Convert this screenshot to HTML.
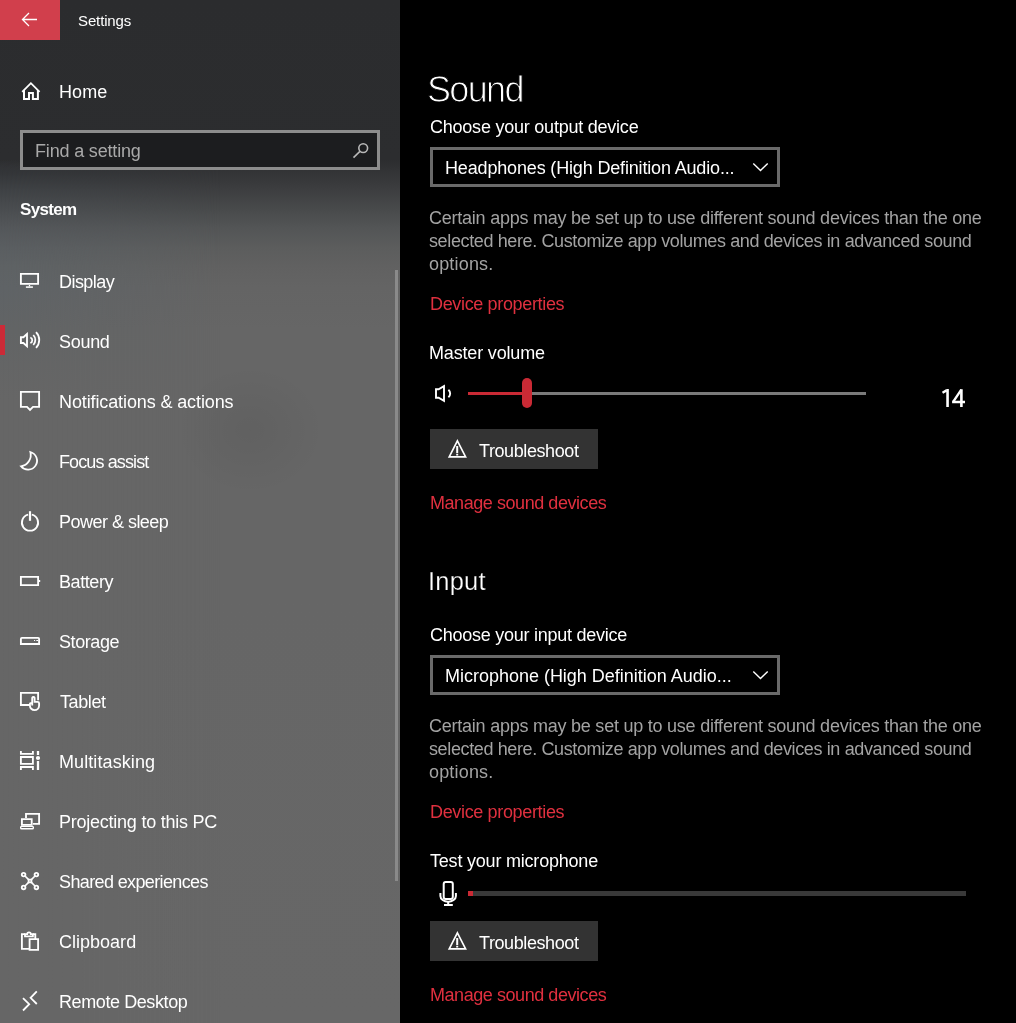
<!DOCTYPE html>
<html><head><meta charset="utf-8"><style>
html,body{margin:0;padding:0;width:1016px;height:1023px;overflow:hidden;background:#000}
body{position:relative;font-family:"Liberation Sans",sans-serif}
.t{position:absolute;white-space:nowrap;line-height:1;-webkit-font-smoothing:antialiased;will-change:transform}
#left{position:absolute;left:0;top:0;width:400px;height:1023px;
background:radial-gradient(ellipse 75px 65px at 250px 430px, rgba(0,0,0,0.055), rgba(0,0,0,0)),linear-gradient(180deg, #2b2c2e 0px, #2c2d2f 160px, #333436 172px, #3d3e40 190px, #484a4b 209px, #535556 228px, #5c5d5d 248px, #616161 267px, #646464 287px, #666 330px, #666 600px, #676767 1023px)}
#leftov{position:absolute;left:0;top:0;width:400px;height:1023px;
background:linear-gradient(180deg, rgba(43,44,46,0) 0px, rgba(43,44,46,0) 160px, #333538 172px, #3f4245 190px, #4a4d50 209px, #54575a 228px, #5a5e61 248px, #5e6264 267px, #5f6366 287px, #626465 330px, #666 400px, #666 1023px);
-webkit-mask-image:linear-gradient(90deg, #000 0px, rgba(0,0,0,0.6) 100px, rgba(0,0,0,0) 220px)}
#right{position:absolute;left:400px;top:0;width:616px;height:1023px;background:#000}
</style></head><body>
<div id="left"></div><div id="leftov"></div>
<div style="position:absolute;left:0;top:0;width:60px;height:40px;background:#d13f4c"></div>
<svg style="position:absolute;left:0px;top:0px;overflow:visible" width="60" height="40" viewBox="0 0 60 40"><path d="M37 19.5H22.5M29 13L22.5 19.5L29 26" stroke="#fff" stroke-width="1.3" fill="none"/></svg>
<svg style="position:absolute;left:20px;top:81px;overflow:visible" width="22" height="22" viewBox="0 0 22 22"><path d="M2.2 10.9L10.9 2.2L19.6 10.9" stroke="#fff" stroke-width="1.8" fill="none"/><path d="M4 9V17.9H9V12H12.9V17.9H17.9V9" stroke="#fff" stroke-width="2" fill="none"/></svg>
<div style="position:absolute;left:20px;top:130px;width:354px;height:34px;border:3px solid #8d8d8d;background:#1c1d1f"></div>
<svg style="position:absolute;left:350px;top:140px;overflow:visible" width="22" height="22" viewBox="0 0 22 22"><circle cx="13.2" cy="8.1" r="4.4" stroke="#b8b8b8" stroke-width="1.6" fill="none"/><path d="M9.9 11.4L3.5 17.6" stroke="#b8b8b8" stroke-width="1.6"/></svg>
<svg style="position:absolute;left:20px;top:271px;overflow:visible" width="22" height="22" viewBox="0 0 22 22"><path d="M0.9 2.9H18.1V12.9H0.9Z" stroke="#fff" stroke-width="1.85" fill="none"/><path d="M9.5 13.9V15.4" stroke="#fff" stroke-width="1.3"/><path d="M5.9 16.1H12.9" stroke="#fff" stroke-width="1.5"/></svg>
<svg style="position:absolute;left:20px;top:331px;overflow:visible" width="22" height="22" viewBox="0 0 22 22"><path d="M7 3L3.4 6.2H0.9V12H3.4L7 15.2Z" stroke="#fff" stroke-width="1.85" fill="none" stroke-linejoin="miter"/><path d="M10.3 6.5A2.9 2.9 0 0 1 10.3 12 M13.3 4A7.25 7.25 0 0 1 13.3 14 M16 1.2A11 11 0 0 1 16 16.8" stroke="#fff" stroke-width="1.8" fill="none"/></svg>
<svg style="position:absolute;left:20px;top:391px;overflow:visible" width="22" height="22" viewBox="0 0 22 22"><path d="M0.9 0.9H19.1V15.8H13L10 19L7 15.8H0.9Z" stroke="#fff" stroke-width="1.85" fill="none"/></svg>
<svg style="position:absolute;left:20px;top:451px;overflow:visible" width="22" height="22" viewBox="0 0 22 22"><path d="M10.4 1A9 9 0 1 1 1 15.3A11.5 11.5 0 0 0 10.4 1Z" stroke="#fff" stroke-width="1.8" fill="none"/></svg>
<svg style="position:absolute;left:20px;top:511px;overflow:visible" width="22" height="22" viewBox="0 0 22 22"><path d="M8.2 3.7A8.1 8.1 0 1 0 11.8 3.7" stroke="#fff" stroke-width="1.85" fill="none"/><path d="M10 0.2V9.8" stroke="#fff" stroke-width="2.2"/></svg>
<svg style="position:absolute;left:20px;top:571px;overflow:visible" width="22" height="22" viewBox="0 0 22 22"><path d="M0.9 5.9H18.1V14.1H0.9Z" stroke="#fff" stroke-width="1.85" fill="none"/><path d="M19 8.9H20.2V11.1H19Z" fill="#fff"/></svg>
<svg style="position:absolute;left:20px;top:631px;overflow:visible" width="22" height="22" viewBox="0 0 22 22"><path d="M0.9 13V7.9Q0.9 6.9 1.9 6.9H18.1Q19.1 6.9 19.1 7.9V13Z" stroke="#fff" stroke-width="1.85" fill="none"/><path d="M14 9H15.1V10H14Z M16.3 9H18V10H16.3Z" fill="#fff"/></svg>
<svg style="position:absolute;left:20px;top:691px;overflow:visible" width="22" height="22" viewBox="0 0 22 22"><path d="M18.1 9.3V1.9H0.9V14H9.4" stroke="#fff" stroke-width="1.85" fill="none"/><path d="M12.2 14.6V6.8A1.3 1.3 0 0 1 14.6 6.8V10.8H17.6Q19.1 10.8 19.1 12.3V14.5A4.6 4.6 0 0 1 9.9 14.5V13.4Q9.9 11.9 11.8 11.9" stroke="#fff" stroke-width="1.85" fill="none"/></svg>
<svg style="position:absolute;left:20px;top:751px;overflow:visible" width="22" height="22" viewBox="0 0 22 22"><path d="M0.9 0V2.9H12.9V0 M0.9 6H12.9V12.9H0.9Z M0.9 19.1V16H12.9V19.1" stroke="#fff" stroke-width="1.85" fill="none"/><path d="M18 0V3.9 M18 10.1V19.1" stroke="#fff" stroke-width="2.3"/><circle cx="18" cy="7" r="2.1" fill="#fff"/></svg>
<svg style="position:absolute;left:20px;top:811px;overflow:visible" width="22" height="22" viewBox="0 0 22 22"><path d="M6 7.1V2.9H19.1V12.9H13" stroke="#fff" stroke-width="1.85" fill="none"/><path d="M1.9 8.1H11.7V13.9H1.9Z" stroke="#fff" stroke-width="1.85" fill="none"/><rect x="0.7" y="15.4" width="12.6" height="2.3" rx="0.8" stroke="#fff" stroke-width="1.4" fill="none"/></svg>
<svg style="position:absolute;left:20px;top:871px;overflow:visible" width="22" height="22" viewBox="0 0 22 22"><circle cx="3.6" cy="3.6" r="1.8" stroke="#fff" stroke-width="1.85" fill="none"/><circle cx="16.4" cy="3.6" r="1.8" stroke="#fff" stroke-width="1.85" fill="none"/><circle cx="3.6" cy="16.4" r="1.8" stroke="#fff" stroke-width="1.85" fill="none"/><circle cx="16.4" cy="16.4" r="1.8" stroke="#fff" stroke-width="1.85" fill="none"/><path d="M8.6 8.6H11.4V11.4H8.6Z" stroke="#fff" stroke-width="1.85" fill="none"/><path d="M5 5L8.6 8.6 M15 5L11.4 8.6 M5 15L8.6 11.4 M15 15L11.4 11.4" stroke="#fff" stroke-width="1.6"/></svg>
<svg style="position:absolute;left:20px;top:931px;overflow:visible" width="22" height="22" viewBox="0 0 22 22"><path d="M9.6 17.9H1.9V3.1H5 M12.9 3.1H15.3V8.1" stroke="#fff" stroke-width="1.85" fill="none"/><path d="M5 5.4V3.1H7.2A1.8 1.8 0 0 1 10.8 3.1H12.9V5.4Z" stroke="#fff" stroke-width="1.8" fill="none"/><path d="M9.6 8.1H18.1V18.9H9.6Z" stroke="#fff" stroke-width="1.85" fill="none"/></svg>
<svg style="position:absolute;left:20px;top:991px;overflow:visible" width="22" height="22" viewBox="0 0 22 22"><path d="M3 7.1L9.2 13.2L3 19.5 M16.8 0.3L10.6 6.8L16.8 13" stroke="#fff" stroke-width="1.8" fill="none"/></svg>
<div style="position:absolute;left:0;top:325px;width:5px;height:30px;background:#cc2a37"></div>
<div style="position:absolute;left:395px;top:270px;width:3px;height:611px;background:#8a8a8a"></div>
<div id="right"></div>
<div style="position:absolute;left:430px;top:147px;width:344px;height:34px;border:3px solid #6a6a6a"></div>
<svg style="position:absolute;left:750px;top:158px;overflow:visible" width="22" height="20" viewBox="0 0 22 20"><path d="M3.3 5.5L10.5 12.5L17.7 5.5" stroke="#fff" stroke-width="1.4" fill="none"/></svg>
<svg style="position:absolute;left:432px;top:382px;overflow:visible" width="22" height="24" viewBox="0 0 22 24"><path d="M12 4.1L6.6 7.2H4V15.7H6.6L12 18.9Z" stroke="#fff" stroke-width="1.9" fill="none"/><path d="M16.4 7.7A5 5 0 0 1 16.4 15.3" stroke="#fff" stroke-width="1.9" fill="none"/></svg>
<div style="position:absolute;left:468px;top:392px;width:398px;height:3px;background:#7a7a7a"></div>
<div style="position:absolute;left:468px;top:392px;width:58px;height:3px;background:#ca2a35"></div>
<div style="position:absolute;left:522px;top:378px;width:10px;height:30px;border-radius:5px;background:#ca2a35"></div>
<div style="position:absolute;left:430px;top:429px;width:168px;height:40px;background:#333"></div>
<svg style="position:absolute;left:446px;top:437px;overflow:visible" width="24" height="24" viewBox="0 0 24 24"><path d="M11.4 3.9L19.6 19.9H3.2Z" stroke="#fff" stroke-width="1.65" fill="none"/><path d="M11.2 8.9V16.3 M11.2 17V18.5" stroke="#fff" stroke-width="2"/></svg>
<div style="position:absolute;left:430px;top:655px;width:344px;height:34px;border:3px solid #6a6a6a"></div>
<svg style="position:absolute;left:750px;top:666px;overflow:visible" width="22" height="20" viewBox="0 0 22 20"><path d="M3.3 5.5L10.5 12.5L17.7 5.5" stroke="#fff" stroke-width="1.4" fill="none"/></svg>
<svg style="position:absolute;left:437px;top:879px;overflow:visible" width="24" height="30" viewBox="0 0 24 30"><rect x="6.7" y="3" width="9.1" height="16.9" rx="2" stroke="#fff" stroke-width="2" fill="none"/><path d="M3.4 13.9V17A7.75 5.7 0 0 0 18.9 17V13.9" stroke="#fff" stroke-width="2" fill="none"/><path d="M11.2 22.7V26 M7 26.05H15.8" stroke="#fff" stroke-width="2" fill="none"/></svg>
<div style="position:absolute;left:468px;top:891px;width:498px;height:5px;background:#393939"></div>
<div style="position:absolute;left:468px;top:891px;width:5px;height:5px;background:#ca2a35"></div>
<div style="position:absolute;left:430px;top:921px;width:168px;height:40px;background:#333"></div>
<svg style="position:absolute;left:446px;top:929px;overflow:visible" width="24" height="24" viewBox="0 0 24 24"><path d="M11.4 3.9L19.6 19.9H3.2Z" stroke="#fff" stroke-width="1.65" fill="none"/><path d="M11.2 8.9V16.3 M11.2 17V18.5" stroke="#fff" stroke-width="2"/></svg>
<svg style="position:absolute;left:936px;top:384px;overflow:visible" width="34" height="28" viewBox="0 0 34 28"><path d="M11.55 5V22.9 M25.4 5.3V22.9 M16.1 18H29" stroke="#fff" stroke-width="2.6" fill="none"/><path d="M10.6 6.4L6.5 8.8 M25.3 5.6L17.3 17.6" stroke="#fff" stroke-width="2.4" fill="none"/></svg>
<div class="t" style="left:77.5px;top:13.2px;font-size:15px;color:#ffffff;letter-spacing:-0.129px;font-weight:normal;">Settings</div>
<div class="t" style="left:59.0px;top:82.56px;font-size:18px;color:#ffffff;letter-spacing:0.1px;font-weight:normal;">Home</div>
<div class="t" style="left:35.4px;top:141.66px;font-size:18px;color:#a9a9a9;letter-spacing:-0.169px;font-weight:normal;">Find a setting</div>
<div class="t" style="left:19.7px;top:201.11px;font-size:17px;color:#ffffff;letter-spacing:-0.66px;font-weight:bold;">System</div>
<div class="t" style="left:58.5px;top:272.76px;font-size:18px;color:#ffffff;letter-spacing:-0.55px;font-weight:normal;">Display</div>
<div class="t" style="left:58.5px;top:332.76px;font-size:18px;color:#ffffff;letter-spacing:-0.3px;font-weight:normal;">Sound</div>
<div class="t" style="left:58.5px;top:392.76px;font-size:18px;color:#ffffff;letter-spacing:-0.114px;font-weight:normal;">Notifications &amp; actions</div>
<div class="t" style="left:58.5px;top:452.76px;font-size:18px;color:#ffffff;letter-spacing:-0.882px;font-weight:normal;">Focus assist</div>
<div class="t" style="left:58.5px;top:512.76px;font-size:18px;color:#ffffff;letter-spacing:-0.517px;font-weight:normal;">Power &amp; sleep</div>
<div class="t" style="left:58.5px;top:572.76px;font-size:18px;color:#ffffff;letter-spacing:-0.417px;font-weight:normal;">Battery</div>
<div class="t" style="left:58.5px;top:632.76px;font-size:18px;color:#ffffff;letter-spacing:-0.417px;font-weight:normal;">Storage</div>
<div class="t" style="left:59.5px;top:692.76px;font-size:18px;color:#ffffff;letter-spacing:-0.4px;font-weight:normal;">Tablet</div>
<div class="t" style="left:58.5px;top:752.76px;font-size:18px;color:#ffffff;letter-spacing:0.091px;font-weight:normal;">Multitasking</div>
<div class="t" style="left:58.5px;top:812.76px;font-size:18px;color:#ffffff;letter-spacing:-0.24px;font-weight:normal;">Projecting to this PC</div>
<div class="t" style="left:58.5px;top:872.76px;font-size:18px;color:#ffffff;letter-spacing:-0.624px;font-weight:normal;">Shared experiences</div>
<div class="t" style="left:58.5px;top:932.76px;font-size:18px;color:#ffffff;letter-spacing:0.012px;font-weight:normal;">Clipboard</div>
<div class="t" style="left:58.5px;top:992.76px;font-size:18px;color:#ffffff;letter-spacing:-0.408px;font-weight:normal;">Remote Desktop</div>
<div class="t" style="left:427.4px;top:72.13px;font-size:36px;color:#ffffff;letter-spacing:-1.675px;font-weight:normal;-webkit-text-stroke:1.0px #000;">Sound</div>
<div class="t" style="left:429.5px;top:117.76px;font-size:18px;color:#ffffff;letter-spacing:-0.229px;font-weight:normal;">Choose your output device</div>
<div class="t" style="left:444.9px;top:158.66px;font-size:18px;color:#ffffff;letter-spacing:-0.16px;font-weight:normal;">Headphones (High Definition Audio...</div>
<div class="t" style="left:429.3px;top:208.66px;font-size:18px;color:#a3a3a3;letter-spacing:-0.236px;font-weight:normal;">Certain apps may be set up to use different sound devices than the one</div>
<div class="t" style="left:429.3px;top:231.66px;font-size:18px;color:#a3a3a3;letter-spacing:-0.377px;font-weight:normal;">selected here. Customize app volumes and devices in advanced sound</div>
<div class="t" style="left:429.3px;top:255.26px;font-size:18px;color:#a3a3a3;letter-spacing:0.171px;font-weight:normal;">options.</div>
<div class="t" style="left:429.9px;top:294.96px;font-size:18px;color:#e0303f;letter-spacing:-0.344px;font-weight:normal;">Device properties</div>
<div class="t" style="left:429.3px;top:343.76px;font-size:18px;color:#ffffff;letter-spacing:-0.167px;font-weight:normal;">Master volume</div>
<div class="t" style="left:478.5px;top:441.76px;font-size:18px;color:#ffffff;letter-spacing:-0.409px;font-weight:normal;">Troubleshoot</div>
<div class="t" style="left:430.0px;top:493.76px;font-size:18px;color:#e0303f;letter-spacing:-0.442px;font-weight:normal;">Manage sound devices</div>
<div class="t" style="left:427.7px;top:568.71px;font-size:25.5px;color:#ffffff;letter-spacing:0.225px;font-weight:normal;-webkit-text-stroke:0.25px #000;">Input</div>
<div class="t" style="left:429.5px;top:625.76px;font-size:18px;color:#ffffff;letter-spacing:-0.252px;font-weight:normal;">Choose your input device</div>
<div class="t" style="left:444.9px;top:666.66px;font-size:18px;color:#ffffff;letter-spacing:-0.014px;font-weight:normal;">Microphone (High Definition Audio...</div>
<div class="t" style="left:429.3px;top:716.66px;font-size:18px;color:#a3a3a3;letter-spacing:-0.236px;font-weight:normal;">Certain apps may be set up to use different sound devices than the one</div>
<div class="t" style="left:429.3px;top:739.66px;font-size:18px;color:#a3a3a3;letter-spacing:-0.377px;font-weight:normal;">selected here. Customize app volumes and devices in advanced sound</div>
<div class="t" style="left:429.3px;top:763.26px;font-size:18px;color:#a3a3a3;letter-spacing:0.171px;font-weight:normal;">options.</div>
<div class="t" style="left:429.9px;top:802.96px;font-size:18px;color:#e0303f;letter-spacing:-0.344px;font-weight:normal;">Device properties</div>
<div class="t" style="left:430.1px;top:851.66px;font-size:18px;color:#ffffff;letter-spacing:-0.205px;font-weight:normal;">Test your microphone</div>
<div class="t" style="left:478.5px;top:933.76px;font-size:18px;color:#ffffff;letter-spacing:-0.409px;font-weight:normal;">Troubleshoot</div>
<div class="t" style="left:430.0px;top:985.76px;font-size:18px;color:#e0303f;letter-spacing:-0.442px;font-weight:normal;">Manage sound devices</div>

</body></html>
